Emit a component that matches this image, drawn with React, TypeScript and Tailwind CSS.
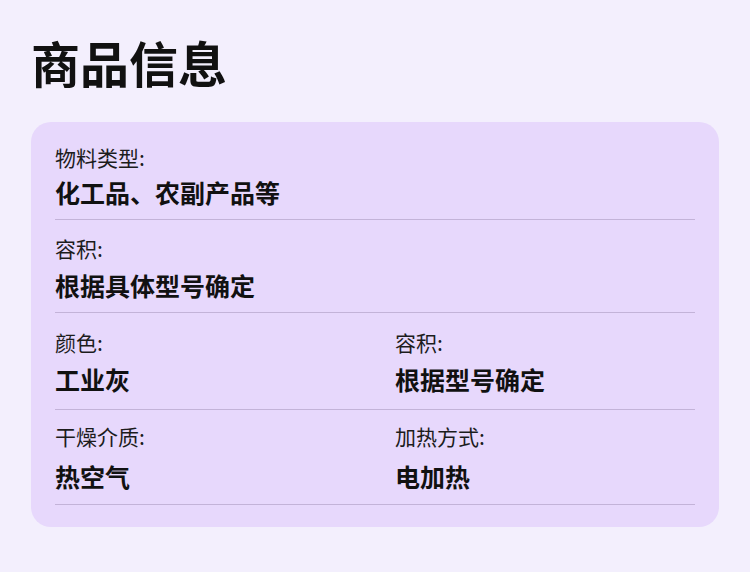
const rows: { label: string; value: string }[][] = [
  [{ label: "物料类型:", value: "化工品、农副产品等" }],
  [{ label: "容积:", value: "根据具体型号确定" }],
  [
    { label: "颜色:", value: "工业灰" },
    { label: "容积:", value: "根据型号确定" },
  ],
  [
    { label: "干燥介质:", value: "热空气" },
    { label: "加热方式:", value: "电加热" },
  ],
];

// per-row vertical spacing, tuned to the reference
const rowPad = [
  "pt-[21px] pb-[11px]",
  "pt-[14px] pb-[11px]",
  "pt-[15px] pb-[14px]",
  "pt-[12px] pb-[12px]",
];
const valueGap = ["mt-[5px]", "mt-[7px]", "mt-[7px]", "mt-[10px]"];

export default function App() {
  return (
    <div
      className="min-h-screen w-full bg-[#f3effd] px-[31px] pt-[33px]"
      style={{ fontFamily: '"Noto Sans CJK SC", "Noto Sans", sans-serif' }}
    >
      <h1 className="text-[49px] font-bold leading-[58px] text-[#111111]">
        商品信息
      </h1>

      <div className="mt-[31px] w-[688px] rounded-[20px] bg-[#e7d8fc] px-6 pb-[22px]">
        {rows.map((row, i) => (
          <div key={i} className={`border-b border-[#c3b3d8] ${rowPad[i]}`}>
            <div className={row.length > 1 ? "grid grid-cols-2 gap-x-10" : ""}>
              {row.map((item, j) => (
                <div key={j} className="flex flex-col">
                  <span className="text-[21px] leading-[28px] text-[#1c1c1c]">
                    {item.label}
                  </span>
                  <span
                    className={`text-[25px] font-bold leading-[32px] text-[#111111] ${valueGap[i]}`}
                  >
                    {item.value}
                  </span>
                </div>
              ))}
            </div>
          </div>
        ))}
      </div>
    </div>
  );
}
